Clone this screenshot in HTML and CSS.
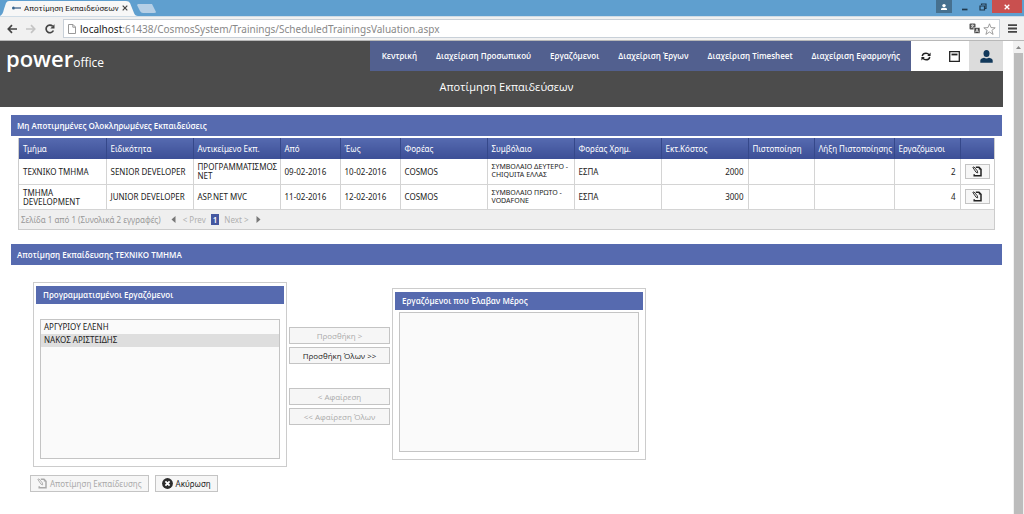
FILE: index.html
```html
<!DOCTYPE html>
<html lang="el">
<head>
<meta charset="utf-8">
<title>Αποτίμηση Εκπαιδεύσεων</title>
<link rel="stylesheet" href="styles.css">
</head>
<body>
<svg class="defs" aria-hidden="true">
  <symbol id="edit" viewBox="0 0 10 11"><path d="M3.8 1.3H7L9 3.3V9.7H2.2V8.3" fill="none" stroke="currentColor" stroke-width="1.5"/><path d="M6.8 1v2.4H9.2z" fill="currentColor"/><path d="M.8 1.4L2 .9 5.3 4.8 5.7 6.9 4 6.2z" fill="#f6f6f6" stroke="currentColor" stroke-width=".9"/></symbol>
</svg>
<div class="tabstrip">
  <svg class="tabshape" viewBox="0 0 160 16" aria-hidden="true"><path d="M0 16C2 15 3 13 4 9L6 3Q7 1 9 1H126Q129 1 130 3L134 13Q135 16 138 16z" fill="#f7f7f7"/><path d="M138 4H152L156 12Q156 13 154 13H143Q141 13 140 11L137 5z" fill="#b5cfe6"/></svg>
  <div class="tab">
    <svg class="favicon" viewBox="0 0 10 6" aria-hidden="true"><circle cx="2.5" cy="3" r="1.5" fill="#36648e"/><path d="M4 3H10" stroke="#5b789b" stroke-width="1.5"/></svg>
    <span class="tab-title">Αποτίμηση Εκπαιδεύσεων</span>
    <button class="plain tab-close" aria-label="Κλείσιμο καρτέλας"><svg width="6" height="6" viewBox="0 0 6 6"><path d="M.7.7L5.3 5.3M5.3.7L.7 5.3" stroke="#444" stroke-width="1.2"/></svg></button>
  </div>
  <div class="window-controls">
    <button class="plain win user" aria-label="Χρήστης"><svg width="8" height="8" viewBox="0 0 8 8"><circle cx="4" cy="2.6" r="1.7" fill="#fff"/><path d="M1 7V6Q1 4.7 4 4.7T7 6V7z" fill="#fff"/></svg></button>
    <button class="plain win" aria-label="Ελαχιστοποίηση"><svg width="8" height="8" viewBox="0 0 8 8"><path d="M1 6.5H6.5" stroke="#20394d" stroke-width="1.7"/></svg></button>
    <button class="plain win" aria-label="Επαναφορά"><svg width="8" height="8" viewBox="0 0 8 8"><path d="M2.5 2V1H7V5.5H6M1 3H5.5V7H1z" fill="none" stroke="#20394d" stroke-width="1.2"/></svg></button>
    <button class="plain win close" aria-label="Κλείσιμο"><svg width="6" height="6" viewBox="0 0 6 6"><path d="M.7.7L5.3 5.3M5.3.7L.7 5.3" stroke="#fff" stroke-width="1.3"/></svg></button>
  </div>
</div>
<div class="toolbar">
  <button class="plain" aria-label="Πίσω"><svg width="10" height="10" viewBox="0 0 10 10"><path d="M10 5H1.5M5 1.2L1.3 5 5 8.8" fill="none" stroke="#444" stroke-width="1.7"/></svg></button>
  <button class="plain" aria-label="Εμπρός"><svg width="10" height="10" viewBox="0 0 10 10"><path d="M0 5H8.5M5 1.2L8.7 5 5 8.8" fill="none" stroke="#c4c4c4" stroke-width="1.7"/></svg></button>
  <button class="plain" aria-label="Ανανέωση"><svg width="10" height="10" viewBox="0 0 10 10"><path d="M8.4 6.5A3.8 3.8 0 1 1 7.6 2.2" fill="none" stroke="#444" stroke-width="1.7"/><path d="M9.5.3V4.5H5.3z" fill="#444"/></svg></button>
  <div class="address">
    <svg width="8" height="10" viewBox="0 0 8 10" aria-hidden="true"><path d="M.5.5H5L7.5 3V9.5H.5zM4.8.5V3.2H7.5" fill="#fff" stroke="#999"/></svg>
    <span class="url"><b>localhost</b>:61438/CosmosSystem/Trainings/ScheduledTrainingsValuation.aspx</span>
    <svg width="11" height="11" viewBox="0 0 11 11" aria-hidden="true"><rect x=".5" y=".5" width="6" height="6" rx="1" fill="#555"/><path d="M2 2.3H5M3.5 1.5V2.3M2.2 5L4.7 2.5M2.5 3L4.7 5" stroke="#fff" stroke-width=".7"/><rect x="5" y="4.5" width="6" height="6" rx="1" fill="#444" stroke="#fff" stroke-width=".6"/><path d="M6.5 9.3L8 5.8 9.5 9.3M7 8.2H9" fill="none" stroke="#fff" stroke-width=".7"/></svg>
    <svg width="13" height="12" viewBox="0 0 13 12" aria-hidden="true"><path d="M6.5.8L8 4.6 12.2 4.8 8.9 7.3 10.1 11.4 6.5 9 2.9 11.4 4.1 7.3.8 4.8 5 4.6z" fill="#fff" stroke="#888" stroke-width=".8"/></svg>
  </div>
  <button class="plain menu" aria-label="Μενού"><svg width="9" height="9" viewBox="0 0 9 9"><path d="M0 1.2H9M0 4.5H9M0 7.8H9" stroke="#444" stroke-width="1.8"/></svg></button>
</div>
<div class="viewport">
  <div class="page">
    <header>
      <div class="topline">
        <a class="logo" href="#"><span class="power">power</span><span class="office">office</span></a>
        <nav>
          <a href="#">Κεντρική</a><a href="#">Διαχείριση Προσωπικού</a><a href="#">Εργαζόμενοι</a><a href="#">Διαχείριση Έργων</a><a href="#">Διαχείριση Timesheet</a><a href="#">Διαχείριση Εφαρμογής</a>
        </nav>
        <div class="tools">
          <button class="plain tool" aria-label="Ανανέωση σελίδας"><svg width="10" height="9" viewBox="0 0 10 9"><path d="M1.2 4Q1.8 1.2 5 1.2 6.8 1.2 8.2 2.7M8.8 5Q8.2 7.8 5 7.8 3.2 7.8 1.8 6.3" fill="none" stroke="#222" stroke-width="1.4"/><path d="M9.6.6V4H6.2zM.4 8.4V5H3.8z" fill="#222"/></svg></button>
          <button class="plain tool" aria-label="Παράθυρο"><svg width="11" height="11" viewBox="0 0 11 11"><path d="M.7.7H10.3V10.3H.7z" fill="none" stroke="#222" stroke-width="1.3"/><path d="M2.5 3.5H8.5" stroke="#222" stroke-width="1.8"/></svg></button>
          <button class="plain tool account" aria-label="Λογαριασμός"><svg width="13" height="13" viewBox="0 0 13 13"><ellipse cx="6.5" cy="3.6" rx="3" ry="3.5" fill="#12395b"/><path d="M.3 12.8V10.6Q.5 8.3 4 7.7 6.5 9.2 9 7.7 12.5 8.3 12.7 10.6V12.8z" fill="#12395b"/></svg></button>
        </div>
      </div>
      <h1>Αποτίμηση Εκπαιδεύσεων</h1>
    </header>
    <main>
      <h2>Μη Αποτιμημένες Ολοκληρωμένες Εκπαιδεύσεις</h2>
      <div class="grid">
        <table>
          <colgroup><col class="wide"><col class="wide"><col class="wide"><col class="date"><col class="date"><col class="wide"><col class="wide"><col class="wide"><col class="wide"><col class="cert"><col class="expiry"><col class="cert"><col class="action"></colgroup>
          <thead><tr><th>Τμήμα</th><th>Ειδικότητα</th><th>Αντικείμενο Εκπ.</th><th>Από</th><th>Έως</th><th>Φορέας</th><th>Συμβόλαιο</th><th>Φορέας Χρημ.</th><th>Εκτ.Κόστος</th><th>Πιστοποίηση</th><th>Λήξη Πιστοποίησης</th><th>Εργαζόμενοι</th><th></th></tr></thead>
          <tbody>
            <tr><td>ΤΕΧΝΙΚΟ ΤΜΗΜΑ</td><td>SENIOR DEVELOPER</td><td>ΠΡΟΓΡΑΜΜΑΤΙΣΜΟΣ NET</td><td>09-02-2016</td><td>10-02-2016</td><td>COSMOS</td><td class="contract">ΣΥΜΒΟΛΑΙΟ ΔΕΥΤΕΡΟ - CHIQUITA ΕΛΛΑΣ</td><td>ΕΣΠΑ</td><td class="num">2000</td><td></td><td></td><td class="num">2</td><td><button class="btn edit" aria-label="Αποτίμηση"><svg width="10" height="11"><use href="#edit"/></svg></button></td></tr>
            <tr><td>ΤΜΗΜΑ DEVELOPMENT</td><td>JUNIOR DEVELOPER</td><td>ASP.NET MVC</td><td>11-02-2016</td><td>12-02-2016</td><td>COSMOS</td><td class="contract">ΣΥΜΒΟΛΑΙΟ ΠΡΩΤΟ - VODAFONE</td><td>ΕΣΠΑ</td><td class="num">3000</td><td></td><td></td><td class="num">4</td><td><button class="btn edit" aria-label="Αποτίμηση"><svg width="10" height="11"><use href="#edit"/></svg></button></td></tr>
          </tbody>
        </table>
        <div class="pager">
          <span>Σελίδα 1 από 1 (Συνολικά 2 εγγραφές)</span>
          <button class="plain prev" disabled><svg width="5" height="7" viewBox="0 0 5 7"><path d="M4.5 0V7L.5 3.5z" fill="#777"/></svg>&lt; Prev</button>
          <span class="current">1</span>
          <button class="plain next" disabled>Next &gt;<svg width="5" height="7" viewBox="0 0 5 7"><path d="M.5 0V7L4.5 3.5z" fill="#777"/></svg></button>
        </div>
      </div>
      <h2>Αποτίμηση Εκπαίδευσης ΤΕΧΝΙΚΟ ΤΜΗΜΑ</h2>
      <form>
        <div class="transfer">
          <section class="panel planned">
            <label for="planned">Προγραμματισμένοι Εργαζόμενοι</label>
            <select id="planned" size="10"><option>ΑΡΓΥΡΙΟΥ ΕΛΕΝΗ</option><option class="picked">ΝΑΚΟΣ ΑΡΙΣΤΕΙΔΗΣ</option></select>
          </section>
          <div class="moves">
            <div class="pair"><button type="button" class="btn" disabled>Προσθήκη &gt;</button><button type="button" class="btn">Προσθήκη Όλων &gt;&gt;</button></div>
            <div class="pair"><button type="button" class="btn" disabled>&lt; Αφαίρεση</button><button type="button" class="btn" disabled>&lt;&lt; Αφαίρεση Όλων</button></div>
          </div>
          <section class="panel">
            <label for="attended">Εργαζόμενοι που Έλαβαν Μέρος</label>
            <select id="attended" size="10"></select>
          </section>
        </div>
        <div class="actions">
          <button type="button" class="btn" disabled><svg width="10" height="11"><use href="#edit"/></svg>Αποτίμηση Εκπαίδευσης</button>
          <button type="button" class="btn"><svg width="11" height="11" viewBox="0 0 11 11"><circle cx="5.5" cy="5.5" r="5.4" fill="#2b2b2b"/><path d="M3.4 3.4L7.6 7.6M7.6 3.4L3.4 7.6" stroke="#fff" stroke-width="1.8"/></svg>Ακύρωση</button>
        </div>
      </form>
    </main>
  </div>
  <div class="scrollbar" aria-hidden="true"><svg width="5" height="3" viewBox="0 0 5 3"><path d="M0 3L2.5 0 5 3z" fill="#888"/></svg><div class="thumb"></div></div>
</div>
</body>
</html>
```
FILE: styles.css
```css
* { box-sizing: border-box; }
html, body { height: 100%; }
body {
  margin: 0;
  display: flex;
  flex-direction: column;
  overflow: hidden;
  background: #fff;
  color: #222;
  font-family: "Open Sans", "Noto Sans", sans-serif;
  font-size: 8px;
}
svg { flex: none; display: block; }
.defs { position: absolute; width: 0; height: 0; }
button, select { font: inherit; color: inherit; }
a { color: inherit; text-decoration: none; }
.plain { border: 0; padding: 0; background: none; display: flex; align-items: center; justify-content: center; }

/* Browser frame */
.tabstrip { position: relative; flex: none; display: flex; justify-content: space-between; height: 16px; background: #5f9fcf; }
.tabshape { position: absolute; left: 0; top: 0; width: 160px; height: 16px; }
.tab { position: relative; display: flex; align-items: center; gap: 3px; width: 128px; padding-left: 11px; }
.favicon { width: 10px; height: 6px; }
.tab-title { flex: 1; font-family: Roboto, sans-serif; white-space: nowrap; }
.window-controls { display: flex; height: 13px; padding-right: 2px; }
.win { width: 18px; }
.win.user { width: 16px; margin-right: 4px; background: #46708f; }
.win.close { width: 30px; background: #c9504f; }
.toolbar { flex: none; display: flex; align-items: center; gap: 9px; height: 25px; padding: 0 7px; background: #f1f1f1; border-top: 1px solid #cfdce6; border-bottom: 1px solid #b8b8b8; }
.address { flex: 1; display: flex; align-items: center; gap: 3px; height: 19px; margin-left: -1px; padding: 0 3px 0 4px; background: #fff; border: 1px solid #c8d0d8; }
.url { flex: 1; padding-left: 1px; font-family: "Noto Sans", sans-serif; font-size: 10px; line-height: 14px; color: #888; white-space: nowrap; }
.url b { font-weight: 400; color: #222; }
.menu { margin-left: -1px; }
.viewport { flex: 1; min-height: 0; display: flex; gap: 10px; }
.page { flex: 1; min-width: 0; }
.scrollbar { width: 11px; display: flex; flex-direction: column; align-items: center; gap: 4px; padding-top: 5px; background: #f1f1f1; }
.thumb { width: 9px; flex: 1; background: #bcbcbc; }

/* Header */
header { background: #4c4c4c; color: #fff; height: 66px; }
.topline { display: flex; align-items: stretch; height: 30px; }
.logo { flex: 1; padding-left: 6px; white-space: nowrap; line-height: 34px; }
.power { font-size: 22px; font-weight: 600; }
.office { font-size: 12px; }
nav { display: flex; align-items: center; gap: 19px; padding: 0 11px 1px 12px; background: #52608f; font-weight: 600; white-space: nowrap; }
.tools { display: flex; }
.tool { width: 29px; background: #fff; }
.tool.account { width: 34px; background: #dcdcdc; }
h1 { margin: 0; padding: 7px 0 0 10px; font-size: 11px; line-height: 18px; font-weight: 400; text-align: center; }

/* Sections */
main { padding: 8px 1px 0 11px; }
h2 { margin: 0; padding-left: 6px; font-size: 8px; line-height: 21px; font-weight: 600; color: #fff; background: #566aaf; }
.grid { margin: 2px 7px 14px; border: 1px solid #ccc; border-top: 0; font-family: "Noto Sans", sans-serif; }
table { width: 100%; table-layout: fixed; border-collapse: collapse; }
.wide { width: 87px; }
.date { width: 60px; }
.cert { width: 66px; }
.expiry { width: 80px; }
.action { width: 34px; }
th { height: 21px; padding: 0 0 0 4px; text-align: left; white-space: nowrap; font-weight: 400; color: #fff; background: linear-gradient(#566ab0, #3c4f96); border-left: 1px solid #35488a; }
td { height: 25px; padding: 0 4px; line-height: 9px; border-left: 1px solid #d4d4d4; border-bottom: 1px solid #d4d4d4; }
th:first-child, td:first-child { border-left: 0; }
.contract { font-size: 7px; line-height: 8px; }
.num { text-align: right; }
.pager { display: flex; align-items: center; height: 19px; padding-left: 2px; background: #efefef; color: #999; }
.pager .plain { gap: 7px; color: #b0b0b0; }
.prev { margin-left: 10px; }
.current { margin: 0 5px; padding: 0 2px; line-height: 11px; font-weight: 600; color: #fff; background: #4558a0; }
.btn { display: flex; align-items: center; justify-content: center; gap: 3px; height: 17px; padding: 0 7px; border: 1px solid #c4c4c4; background: #f6f6f6; white-space: nowrap; }
.btn:disabled { color: #aaa; }
.edit { width: 25px; height: 15px; padding: 0; }

/* Employee selection */
form { padding: 17px 0 0 19px; }
.transfer { display: flex; align-items: center; gap: 2px; padding-left: 3px; }
.panel { width: 254px; padding: 3px 2px; border: 1px solid #ccc; }
.panel label { display: block; padding-left: 7px; line-height: 18px; font-weight: 600; color: #fff; background: #566aaf; }
.panel select { display: block; width: calc(100% - 8px); height: 140px; margin: 2px 4px 4px; padding: 1px 0; overflow: hidden; border: 1px solid #c4c4c4; border-radius: 0; background: #fafafa; outline: 0; }
.planned select { margin-top: 15px; }
option { padding: 0 3px; min-height: 13px; line-height: 13px; font-family: "Noto Sans", sans-serif; }
.picked { background: #dedede; }
.moves { display: flex; flex-direction: column; gap: 24px; width: 101px; padding-top: 4px; }
.pair { display: grid; gap: 3px; }
.actions { display: flex; gap: 6px; margin-top: 8px; }
.actions .btn { padding: 0 6px; font-family: "Noto Sans", sans-serif; }
```
